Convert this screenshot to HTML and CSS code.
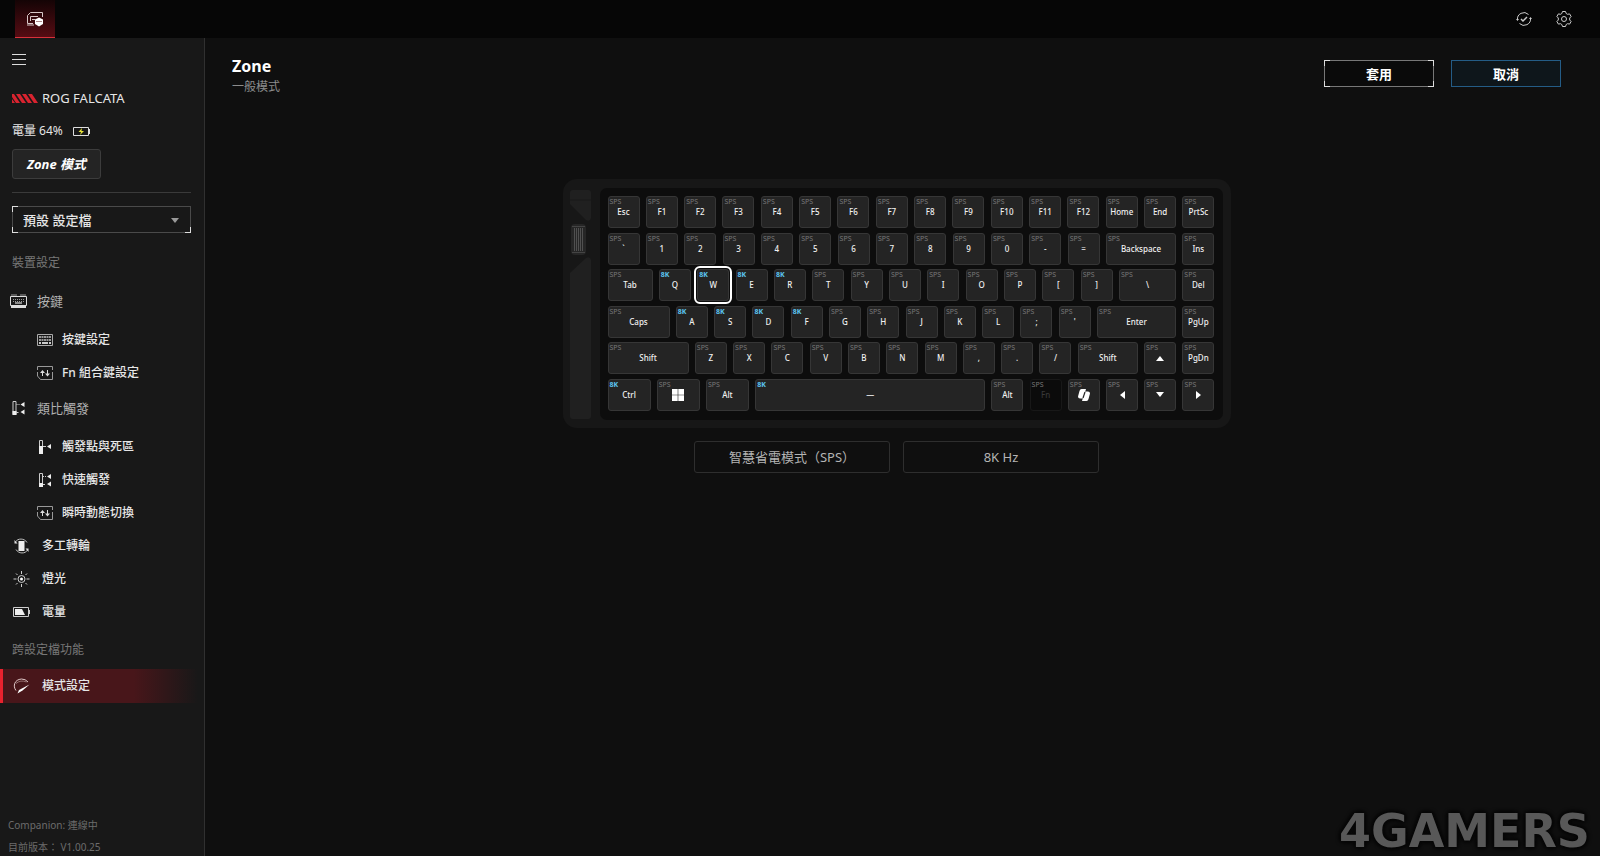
FILE: index.html
```html
<!doctype html>
<html lang="zh-Hant">
<head>
    <meta charset="utf-8">
    <title>ROG FALCATA - Zone</title>
    <link rel="stylesheet" href="styles.css">
</head>
<body>
    <!-- Shared icons -->
    <svg class="sprite" aria-hidden="true">
        <symbol id="swap" viewBox="0 0 16 14">
            <path d="M.5 4V.5h15V4M.5 6v4l3 3.500h12V6" fill="none" stroke="#999" stroke-dasharray="30 1"/>
            <path d="M5.500 10V5M10.500 4v5" fill="none" stroke="#ddd"/>
            <path d="M3 7l2.500-3L8 7zM8 7.500l2.500 3 2.500-3z" fill="#ddd"/>
        </symbol>
        <symbol id="rapid" viewBox="0 0 14 14">
            <path d="M1.500.5h3v13h-3zM5 3.500h1M7 3.500h1M5 11.500h2" fill="none" stroke="#ccc"/>
            <path d="M1 10h4v4H1zM9 3.500 13 1v5zM9 11l4-2.500v5z" fill="#eee"/>
        </symbol>
    </svg>

    <header class="topbar">
        <button class="device-tab" aria-label="ROG FALCATA">
            <svg width="18" height="16" viewBox="0 0 18 16">
                <path d="M1.500 12.500V4.500l3-3h12V6M1.500 12.500H7M4.500 10V5.500H12M6 8.500h3M1 14h7" fill="none" stroke="#d8c8c8"/>
                <path d="m9 8.500 4-2 4 2v4.500l-4 2.500L9 13z" fill="#fff"/>
                <path d="M10.500 10.500h1M12.500 10.500h1M14.500 10.500h1" stroke="#511"/>
            </svg>
        </button>
        <div class="topbar-tools">
            <button class="tool" aria-label="更新">
                <svg width="16" height="16" viewBox="0 0 16 16" fill="none" stroke="#ccc">
                    <path d="M1.500 9a6.500 6.500 0 0 1 11-5.500M14.500 7a6.500 6.500 0 0 1-11 5.500"/>
                    <path d="m5 8 2 2 4-4" stroke-width="1.500"/>
                    <path d="M0 8h3L1.500 10zM13 8h3l-1.500-2z" fill="#ccc" stroke="none"/>
                </svg>
            </button>
            <button class="tool" aria-label="設定">
                <svg width="16" height="16" viewBox="0 0 16 16" fill="none" stroke="#ccc">
                    <path d="M6.500.5h3l.7 2 1.300.8 2.100-.4 1.500 2.600L13.700 7v2l1.400 1.500-1.500 2.600-2.100-.4-1.300.8-.7 2h-3l-.7-2-1.300-.8-2.100.4-1.500-2.600L2.300 9V7L.9 5.500l1.500-2.600 2.100.4 1.300-.8z"/>
                    <circle cx="8" cy="8" r="2.500"/>
                </svg>
            </button>
        </div>
    </header>

    <div class="layout">
        <aside class="sidebar">
            <button class="menu" aria-label="選單"><svg width="14" height="11" viewBox="0 0 14 11"><path d="M0 .5h14M0 5.500h14M0 10.500h14" stroke="#ddd"/></svg></button>
            <div class="device">
                <svg width="26" height="9" viewBox="0 0 26 9"><path d="M0 0h2l6 9H4L0 3zM4 0h4l6 9h-4zM10 0h4l6 9h-4zM16 0h4l6 9h-4zM0 5l3 4H0z" fill="#d8232f"/></svg>
                <span>ROG FALCATA</span>
            </div>
            <div class="battery">
                <span>電量 64%</span>
                <svg width="17" height="9" viewBox="0 0 17 9"><path d="M.5.5h15v8H.5zM16.500 2v5" fill="none" stroke="#ddd"/><path d="M9 1 5.500 5H8L7 8l4-4H8.500z" fill="#e8e337"/></svg>
            </div>
            <button class="mode">Zone 模式</button>
            <hr class="divider">
            <div class="profile corners">
                <select aria-label="設定檔"><option>預設 設定檔</option></select>
                <svg class="arrow" width="8" height="5" viewBox="0 0 8 5"><path d="M0 0h8L4 5z" fill="#999"/></svg>
            </div>

            <nav class="nav">
                <h2 class="nav-label">裝置設定</h2>
                <div class="nav-group">
                    <svg width="17" height="14" viewBox="0 0 17 14"><path d="M.5 2.500h16v9H.5z" fill="none" stroke="#ddd"/><path d="M1 13h15" stroke="#ddd" stroke-width="2"/><path d="M1 1h6M10 1h6" stroke="#999"/><path d="M3 5.500h11M3 7.500h11" stroke="#999" stroke-dasharray="1 1"/><path d="M5 9h7" stroke="#fff"/></svg>
                    <span>按鍵</span>
                </div>
                <a class="nav-item sub" href="#keys">
                    <svg width="16" height="12" viewBox="0 0 16 12"><path d="M.5.5h15v11H.5z" fill="none" stroke="#aaa"/><path d="M2 3h12M2 6h12" stroke="#999" stroke-width="2" stroke-dasharray="2 .5"/><path d="M2 9h2M5 9h6M12 9h2" stroke="#ccc" stroke-width="2"/></svg>
                    <span>按鍵設定</span>
                </a>
                <a class="nav-item sub" href="#fn"><svg width="16" height="14"><use href="#swap"/></svg><span>Fn 組合鍵設定</span></a>
                <div class="nav-group"><svg width="14" height="14"><use href="#rapid"/></svg><span>類比觸發</span></div>
                <a class="nav-item sub" href="#actuation">
                    <svg width="14" height="14" viewBox="0 0 14 14"><path d="M1.500.5h3v13h-3zM4 6.500h4" fill="none" stroke="#ccc"/><path d="M1 6h4v8H1zM9 6.500 13 4v5z" fill="#eee"/></svg>
                    <span>觸發點與死區</span>
                </a>
                <a class="nav-item sub" href="#rapid-trigger"><svg width="14" height="14"><use href="#rapid"/></svg><span>快速觸發</span></a>
                <a class="nav-item sub" href="#speedtap"><svg width="16" height="14"><use href="#swap"/></svg><span>瞬時動態切換</span></a>
                <a class="nav-item" href="#wheel">
                    <svg width="16" height="16" viewBox="0 0 16 16"><path d="M5 3h6v10H5z" fill="#eee"/><path d="M2 4C4 0 11 0 13.500 4.500M14 12C12 16 5 16 2.500 11.500" fill="none" stroke="#bbb"/><path d="M1 2v3.500h3zM15 14v-3.500h-3z" fill="#ddd"/></svg>
                    <span>多工轉輪</span>
                </a>
                <a class="nav-item" href="#lighting">
                    <svg width="16" height="16" viewBox="0 0 16 16" fill="none" stroke="#ccc"><circle cx="8" cy="8" r="3.500"/><circle cx="8" cy="8" r="1.500" fill="#fff" stroke="none"/><path d="M8 0v3M8 13v3M0 8h3M13 8h3M2.500 2.500 4 4M12 12l1.500 1.500M2.500 13.500 4 12M12 4l1.500-1.500"/></svg>
                    <span>燈光</span>
                </a>
                <a class="nav-item" href="#power">
                    <svg width="17" height="10" viewBox="0 0 17 10"><path d="M.5.5h15v9H.5zM16.500 3v4" fill="none" stroke="#ccc"/><path d="M2 2h7l3 6H2z" fill="#eee"/></svg>
                    <span>電量</span>
                </a>
                <h2 class="nav-label">跨設定檔功能</h2>
                <a class="nav-item active" href="#mode">
                    <svg width="16" height="16" viewBox="0 0 16 16"><path d="M2.500 12.500C-1 8 1 1.500 8 1q4 0 6.500 3" fill="none" stroke="#e0c8c8"/><path d="M2.500 5.500Q7 1.500 13 4" fill="none" stroke="#a88" stroke-width=".8"/><path d="M16 6.500 9 12.500l-5 3 1.500-3.500z" fill="#fff"/></svg>
                    <span>模式設定</span>
                </a>
            </nav>

            <footer class="versions">
                <p>Companion: 連線中</p>
                <p>目前版本： V1.00.25</p>
            </footer>
        </aside>

        <main class="content">
            <div class="page-head">
                <div>
                    <h1>Zone</h1>
                    <p>一般模式</p>
                </div>
                <div class="actions">
                    <button class="action apply corners">套用</button>
                    <button class="action cancel">取消</button>
                </div>
            </div>

            <div class="keyboard">
                <svg class="rail" width="21" height="229" viewBox="0 0 21 229">
                    <path d="M3 0h15q3 0 3 3v25q-1 4-5 2L0 14V3q0-3 3-3z" fill="#202020"/>
                    <path d="M0 10h21" stroke="#191919"/>
                    <path d="M0 83 16 68q4-2 5 2v156q0 3-3 3H3q-3 0-3-3z" fill="#202020"/>
                    <rect x="1" y="34" width="15" height="31" rx="4" fill="#262626"/>
                    <path d="M4.500 38v23M6.500 38v23M8.500 38v23M10.500 38v23M12.500 38v23" stroke="#505050"/>
                    <path d="M2 36.500h13M2 62.500h13" stroke="#444"/>
                </svg>
                <div class="keys">
                    <div class="row">
                        <button class="key"><small>SPS</small>Esc</button>
                        <button class="key"><small>SPS</small>F1</button>
                        <button class="key"><small>SPS</small>F2</button>
                        <button class="key"><small>SPS</small>F3</button>
                        <button class="key"><small>SPS</small>F4</button>
                        <button class="key"><small>SPS</small>F5</button>
                        <button class="key"><small>SPS</small>F6</button>
                        <button class="key"><small>SPS</small>F7</button>
                        <button class="key"><small>SPS</small>F8</button>
                        <button class="key"><small>SPS</small>F9</button>
                        <button class="key"><small>SPS</small>F10</button>
                        <button class="key"><small>SPS</small>F11</button>
                        <button class="key"><small>SPS</small>F12</button>
                        <button class="key"><small>SPS</small>Home</button>
                        <button class="key"><small>SPS</small>End</button>
                        <button class="key"><small>SPS</small>PrtSc</button>
                    </div>
                    <div class="row">
                        <button class="key"><small>SPS</small>`</button>
                        <button class="key"><small>SPS</small>1</button>
                        <button class="key"><small>SPS</small>2</button>
                        <button class="key"><small>SPS</small>3</button>
                        <button class="key"><small>SPS</small>4</button>
                        <button class="key"><small>SPS</small>5</button>
                        <button class="key"><small>SPS</small>6</button>
                        <button class="key"><small>SPS</small>7</button>
                        <button class="key"><small>SPS</small>8</button>
                        <button class="key"><small>SPS</small>9</button>
                        <button class="key"><small>SPS</small>0</button>
                        <button class="key"><small>SPS</small>-</button>
                        <button class="key"><small>SPS</small>=</button>
                        <button class="key backspace"><small>SPS</small>Backspace</button>
                        <button class="key"><small>SPS</small>Ins</button>
                    </div>
                    <div class="row">
                        <button class="key tab"><small>SPS</small>Tab</button>
                        <button class="key fast"><small>8K</small>Q</button>
                        <button class="key fast selected"><small>8K</small>W</button>
                        <button class="key fast"><small>8K</small>E</button>
                        <button class="key fast"><small>8K</small>R</button>
                        <button class="key"><small>SPS</small>T</button>
                        <button class="key"><small>SPS</small>Y</button>
                        <button class="key"><small>SPS</small>U</button>
                        <button class="key"><small>SPS</small>I</button>
                        <button class="key"><small>SPS</small>O</button>
                        <button class="key"><small>SPS</small>P</button>
                        <button class="key"><small>SPS</small>[</button>
                        <button class="key"><small>SPS</small>]</button>
                        <button class="key backslash"><small>SPS</small>\</button>
                        <button class="key"><small>SPS</small>Del</button>
                    </div>
                    <div class="row">
                        <button class="key caps"><small>SPS</small>Caps</button>
                        <button class="key fast"><small>8K</small>A</button>
                        <button class="key fast"><small>8K</small>S</button>
                        <button class="key fast"><small>8K</small>D</button>
                        <button class="key fast"><small>8K</small>F</button>
                        <button class="key"><small>SPS</small>G</button>
                        <button class="key"><small>SPS</small>H</button>
                        <button class="key"><small>SPS</small>J</button>
                        <button class="key"><small>SPS</small>K</button>
                        <button class="key"><small>SPS</small>L</button>
                        <button class="key"><small>SPS</small>;</button>
                        <button class="key"><small>SPS</small>'</button>
                        <button class="key enter"><small>SPS</small>Enter</button>
                        <button class="key"><small>SPS</small>PgUp</button>
                    </div>
                    <div class="row">
                        <button class="key left-shift"><small>SPS</small>Shift</button>
                        <button class="key"><small>SPS</small>Z</button>
                        <button class="key"><small>SPS</small>X</button>
                        <button class="key"><small>SPS</small>C</button>
                        <button class="key"><small>SPS</small>V</button>
                        <button class="key"><small>SPS</small>B</button>
                        <button class="key"><small>SPS</small>N</button>
                        <button class="key"><small>SPS</small>M</button>
                        <button class="key"><small>SPS</small>,</button>
                        <button class="key"><small>SPS</small>.</button>
                        <button class="key"><small>SPS</small>/</button>
                        <button class="key right-shift"><small>SPS</small>Shift</button>
                        <button class="key" aria-label="Up"><small>SPS</small><svg width="8" height="5" viewBox="0 0 8 5"><path d="M0 5h8L4 0z" fill="#fff"/></svg></button>
                        <button class="key"><small>SPS</small>PgDn</button>
                    </div>
                    <div class="row">
                        <button class="key modifier fast"><small>8K</small>Ctrl</button>
                        <button class="key modifier" aria-label="Windows"><small>SPS</small><svg width="12" height="12" viewBox="0 0 12 12"><path d="M0 0h5.700v5.700H0zM6.300 0H12v5.700H6.300zM0 6.300h5.700V12H0zM6.300 6.300H12V12H6.300z" fill="#fff"/></svg></button>
                        <button class="key modifier"><small>SPS</small>Alt</button>
                        <button class="key space fast"><small>8K</small>—</button>
                        <button class="key"><small>SPS</small>Alt</button>
                        <button class="key" disabled><small>SPS</small>Fn</button>
                        <button class="key" aria-label="Copilot"><small>SPS</small><svg width="12" height="12" viewBox="0 0 12 12"><path d="M3.500 0h4.500L5.500 8.500Q5 9.500 4 9.500H2Q0 9.500 0 7.500L1.500 2Q2 0 3.500 0z" fill="#fff"/><path d="M8.500 12H4L6.500 3.500q.5-1 1.500-1h2q2 0 2 2L10.500 10q-.5 2-2 2z" fill="#fff"/><path d="M7 3 5 9" stroke="#242424" stroke-width="1.200"/></svg></button>
                        <button class="key" aria-label="Left"><small>SPS</small><svg width="5" height="8" viewBox="0 0 5 8"><path d="M5 0v8L0 4z" fill="#fff"/></svg></button>
                        <button class="key" aria-label="Down"><small>SPS</small><svg width="8" height="5" viewBox="0 0 8 5"><path d="M0 0h8L4 5z" fill="#fff"/></svg></button>
                        <button class="key" aria-label="Right"><small>SPS</small><svg width="5" height="8" viewBox="0 0 5 8"><path d="M0 0v8l5-4z" fill="#fff"/></svg></button>
                    </div>
                </div>
            </div>

            <div class="rates">
                <button class="rate">智慧省電模式（SPS）</button>
                <button class="rate">8K Hz</button>
            </div>
        </main>
    </div>
    <div class="watermark">4GAMERS</div>
</body>
</html>
```
FILE: styles.css
```css
* {
    box-sizing: border-box;
}
body {
    display: flex;
    flex-direction: column;
    min-height: 100vh;
    margin: 0;
    background: #0f0f0f;
    color: #e6e6e6;
    font: 12px/16px "Noto Sans", "Noto Sans CJK TC", sans-serif;
}
h1, h2, p {
    margin: 0;
}
button, select {
    padding: 0;
    border: 0;
    background: none;
    color: inherit;
    font: inherit;
}
svg {
    display: block;
    flex: none;
}
.sprite {
    position: absolute;
    width: 0;
    height: 0;
}

/* Top bar */
.topbar {
    display: flex;
    justify-content: space-between;
    height: 38px;
    padding: 0 28px 0 15px;
    background: #060606;
}
.device-tab {
    display: grid;
    place-items: center;
    width: 40px;
    border-bottom: 1px solid #d8303a;
    background: linear-gradient(#140405, #560c13);
}
.topbar-tools {
    display: flex;
    align-items: center;
    gap: 24px;
}

.layout {
    display: flex;
    flex: 1;
}

/* Sidebar */
.sidebar {
    display: flex;
    flex-direction: column;
    width: 205px;
    border-right: 1px solid #303030;
    background: #181818;
}
.menu {
    align-self: flex-start;
    margin: 16px 12px 0;
}
.device {
    display: flex;
    align-items: center;
    gap: 4px;
    margin: 23px 12px 0;
    font-size: 13px;
    line-height: 20px;
}
.battery {
    display: flex;
    align-items: center;
    gap: 10px;
    margin: 15px 12px 0;
}
.mode {
    align-self: flex-start;
    height: 30px;
    margin: 10px 12px 0;
    padding: 0 14px;
    border: 1px solid #3c3c3c;
    border-radius: 3px;
    background: #242424;
    color: #fff;
    font-size: 13px;
    font-style: italic;
    font-weight: 700;
}
.divider {
    margin: 13px 13px 13px 12px;
    border: 0;
    border-top: 1px solid #3a3a3a;
}
.profile {
    margin: 0 13px 0 12px;
}
.profile select {
    display: block;
    width: 100%;
    height: 27px;
    padding: 0 10px;
    border: 1px solid #4a4a4a;
    appearance: none;
    font-size: 13px;
    font-weight: 500;
}
.arrow {
    position: absolute;
    top: 12px;
    right: 12px;
    pointer-events: none;
}
/* Bright brackets over the corners of a thin frame */
.corners {
    --c: #ddd;
    --top-right: #4a4a4a;
    position: relative;
}
.corners::after {
    content: "";
    position: absolute;
    inset: 0;
    pointer-events: none;
    background:
        linear-gradient(var(--c), var(--c)) 0 0 / 6px 1px,
        linear-gradient(var(--c), var(--c)) 0 0 / 1px 6px,
        linear-gradient(var(--top-right), var(--top-right)) 100% 0 / 6px 1px,
        linear-gradient(var(--top-right), var(--top-right)) 100% 0 / 1px 6px,
        linear-gradient(var(--c), var(--c)) 0 100% / 6px 1px,
        linear-gradient(var(--c), var(--c)) 0 100% / 1px 6px,
        linear-gradient(var(--c), var(--c)) 100% 100% / 6px 1px,
        linear-gradient(var(--c), var(--c)) 100% 100% / 1px 6px;
    background-repeat: no-repeat;
}

.nav {
    margin-top: 8px;
}
.nav-label {
    margin-top: 3px;
    padding: 0 12px;
    color: #777;
    font-size: 12px;
    font-weight: 400;
    line-height: 38px;
}
.nav-group, .nav-item {
    display: flex;
    align-items: center;
}
.nav-group {
    height: 38px;
    margin-bottom: 3px;
    padding-left: 10px;
    color: #b0b0b0;
    font-size: 13px;
}
.nav-group svg {
    width: 17px;
    margin-right: 10px;
}
.nav-item {
    height: 33px;
    padding-left: 10px;
    border-left: 3px solid transparent;
    color: #e6e6e6;
    font-weight: 500;
    text-decoration: none;
}
.nav-item svg {
    width: 17px;
    margin-right: 12px;
}
.nav-item.sub {
    padding-left: 34px;
}
.nav-item.sub svg {
    width: 16px;
    margin-right: 9px;
}
.nav-item.active {
    height: 34px;
    border-image: linear-gradient(90deg, #e8222e 67%, #48161a 67%) 0 0 0 3;
    background: linear-gradient(90deg, #48161a 65%, #181818 97%);
}
.versions {
    display: grid;
    gap: 4px;
    margin-top: auto;
    padding: 0 8px;
    color: #6c6c6c;
    font-size: 10px;
    line-height: 18px;
}

/* Main page */
.content {
    flex: 1;
    padding: 17px 39px 0 27px;
}
.page-head {
    display: flex;
    justify-content: space-between;
    margin-bottom: 82px;
}
.page-head h1 {
    color: #fff;
    font-size: 16px;
    line-height: 22px;
}
.page-head p {
    color: #8c8c8c;
    line-height: 20px;
}
.actions {
    display: flex;
    align-items: flex-start;
    gap: 17px;
    padding-top: 5px;
}
.action {
    width: 110px;
    height: 27px;
    border: 1px solid #777;
    color: #fff;
    font-size: 13px;
    font-weight: 700;
}
.apply {
    --top-right: #ddd;
    background: #0a0a0a;
}
.apply::after {
    inset: -1px;
}
.cancel {
    border-color: #245c86;
    background: #0e161b;
}

/* Keyboard */
.keyboard {
    display: flex;
    gap: 9px;
    width: fit-content;
    margin: 0 auto;
    padding: 9px 8px 8px 7px;
    border-radius: 14px;
    background: #171717;
}
.rail {
    margin-top: 2px;
}
.keys {
    display: grid;
    align-content: space-between;
    width: 623px;
    height: 232px;
    padding: 8px 8px 9px;
    border-radius: 7px;
    background: #0d0d0d;
}
.row {
    display: flex;
    justify-content: space-between;
}
.key {
    position: relative;
    display: grid;
    place-items: center;
    width: 32px;
    height: 32px;
    border: 1px solid #363636;
    border-radius: 3px;
    background: #242424;
    color: #f0f0f0;
    font-size: 8px;
    font-weight: 500;
}
.key small {
    position: absolute;
    top: 0;
    left: 1px;
    color: #777;
    font-size: 7px;
    font-weight: 400;
    line-height: 9px;
}
.key.fast small {
    color: #5cc4f0;
    font-weight: 700;
}
.key.selected {
    outline: 2px solid #fff;
    outline-offset: 1px;
}
.key:disabled {
    border-color: #181818;
    background: #0b0b0b;
    color: #383838;
}
.modifier { width: 43px; }
.tab { width: 45px; }
.backslash { width: 57px; }
.right-shift { width: 60px; }
.caps { width: 62px; }
.backspace { width: 70px; }
.enter { width: 79px; }
.left-shift { width: 81px; }
.space { width: 230px; }

.rates {
    display: flex;
    justify-content: center;
    gap: 13px;
    margin-top: 13px;
}
.rate {
    width: 196px;
    height: 32px;
    border: 1px solid #2e2e2e;
    border-radius: 3px;
    color: #b4b4b4;
    font-size: 13px;
}

.watermark {
    position: fixed;
    right: 10px;
    bottom: 1px;
    color: #585858;
    font: 700 46px/48px "DejaVu Sans", sans-serif;
    text-shadow: 0 0 5px #060606, 0 0 5px #060606, 0 0 5px #060606;
    pointer-events: none;
}
```
